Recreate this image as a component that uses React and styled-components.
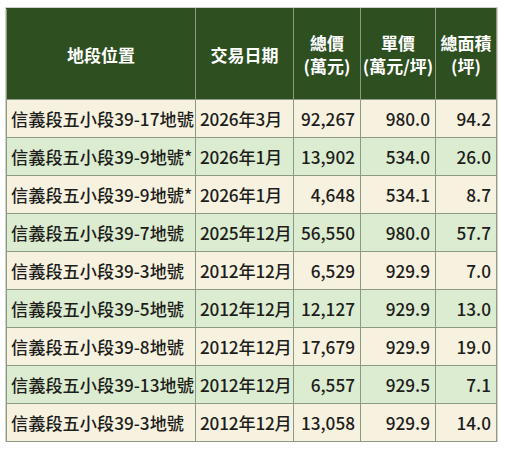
import React from 'react';
import styled, { createGlobalStyle } from 'styled-components';

const GlobalStyle = createGlobalStyle`
  body {
    margin: 0;
    background: #ffffff;
    font-family: "Noto Sans CJK TC", "Noto Sans", sans-serif;
  }
`;

const Page = styled.div`
  padding: 8px 0 0 6px;
`;

const Table = styled.table`
  border-collapse: collapse;
  width: 490px;
  table-layout: fixed;
  outline: 1px solid #cfd3cc;
`;

const HeadCell = styled.th`
  background: #2e4f1f;
  color: #ffffff;
  font-size: 17px;
  font-weight: 700;
  line-height: 23px;
  height: 90px;
  padding: 0 1px;
  text-align: center;
  border: 1px solid #8c9a84;
  border-top-color: #2e4f1f;
  white-space: nowrap;
`;

const Row = styled.tr`
  background: ${p => (p.$alt ? '#dcecd0' : '#f7f2e0')};
`;

const Cell = styled.td`
  height: 37px;
  padding: 0 5px 0 4px;
  font-size: 17.2px;
  font-weight: 500;
  color: #1d1d1b;
  text-align: ${p => p.$align || 'left'};
  border: 1px solid #8c9a84;
  white-space: nowrap;
  overflow: hidden;
`;

const DateCell = styled(Cell)`
  padding: 0 1px 0 4px;
  letter-spacing: -0.2px;
`;

const rows = [
  ['信義段五小段39-17地號', '2026年3月', '92,267', '980.0', '94.2'],
  ['信義段五小段39-9地號*', '2026年1月', '13,902', '534.0', '26.0'],
  ['信義段五小段39-9地號*', '2026年1月', '4,648', '534.1', '8.7'],
  ['信義段五小段39-7地號', '2025年12月', '56,550', '980.0', '57.7'],
  ['信義段五小段39-3地號', '2012年12月', '6,529', '929.9', '7.0'],
  ['信義段五小段39-5地號', '2012年12月', '12,127', '929.9', '13.0'],
  ['信義段五小段39-8地號', '2012年12月', '17,679', '929.9', '19.0'],
  ['信義段五小段39-13地號', '2012年12月', '6,557', '929.5', '7.1'],
  ['信義段五小段39-3地號', '2012年12月', '13,058', '929.9', '14.0'],
];

export default function App() {
  return (
    <Page>
      <GlobalStyle />
      <Table>
        <colgroup>
          <col style={{ width: 189 }} />
          <col style={{ width: 98 }} />
          <col style={{ width: 67 }} />
          <col style={{ width: 75 }} />
          <col style={{ width: 61 }} />
        </colgroup>
        <thead>
          <tr>
            <HeadCell>地段位置</HeadCell>
            <HeadCell>交易日期</HeadCell>
            <HeadCell>總價<br />(萬元)</HeadCell>
            <HeadCell>單價<br />(萬元/坪)</HeadCell>
            <HeadCell>總面積<br />(坪)</HeadCell>
          </tr>
        </thead>
        <tbody>
          {rows.map((r, i) => (
            <Row key={i} $alt={i % 2 === 1}>
              <Cell>{r[0]}</Cell>
              <DateCell>{r[1]}</DateCell>
              <Cell $align="right">{r[2]}</Cell>
              <Cell $align="right">{r[3]}</Cell>
              <Cell $align="right">{r[4]}</Cell>
            </Row>
          ))}
        </tbody>
      </Table>
    </Page>
  );
}
